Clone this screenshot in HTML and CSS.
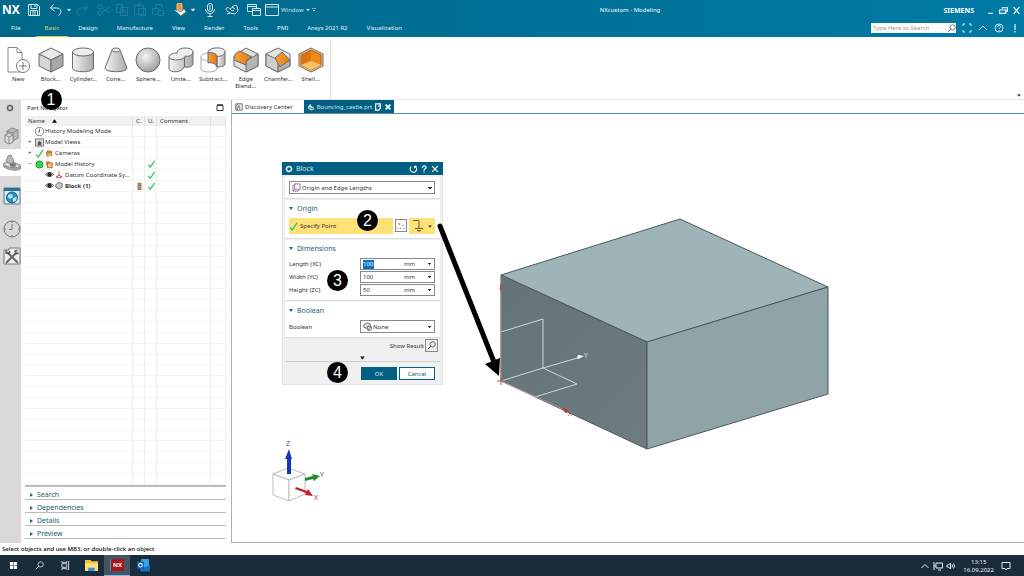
FILE: index.html
```html
<!DOCTYPE html>
<html lang="en">
<head>
<meta charset="utf-8">
<title>NXcustom - Modeling</title>
<link rel="stylesheet" href="styles.css">
</head>
<body>
<svg class="defs" aria-hidden="true">
  <defs>
    <linearGradient id="metal" x1="0" x2="1"><stop offset="0" stop-color="#f4f4f4"/><stop offset="1" stop-color="#a9a9a9"/></linearGradient>
    <radialGradient id="ball" cx=".4" cy=".35" r=".7"><stop offset="0" stop-color="#f6f6f6"/><stop offset="1" stop-color="#999"/></radialGradient>
    <linearGradient id="amber" x1="0" x2="1"><stop offset="0" stop-color="#f9a23a"/><stop offset="1" stop-color="#e27a10"/></linearGradient>
    <symbol id="tick" viewBox="0 0 10 10"><path d="M1 6l2.500 3L9 1" fill="none" stroke="#2fc653" stroke-width="1.500"/></symbol>
    <symbol id="eye" viewBox="0 0 10 10"><path d="M.5 5Q5 .5 9.500 5Q5 9.500 .5 5z" fill="#fff" stroke="#444"/><circle cx="5" cy="5" r="2.400" fill="#222"/></symbol>
    <symbol id="caret" viewBox="0 0 6 4"><path d="M0 0h6L3 4z" fill="currentColor"/></symbol>
    <symbol id="lens" viewBox="0 0 12 12"><circle cx="7.500" cy="4.500" r="3.500" fill="none" stroke="currentColor"/><path d="M5 7L1 11" stroke="currentColor" stroke-width="1.300"/></symbol>
  </defs>
</svg>

<header class="top">
  <div class="titlebar">
    <span class="brand">NX</span>
    <div class="group">
      <button aria-label="Save"><svg viewBox="0 0 14 14"><path d="M1.500 1.500h9l2 2v9h-11zM4 1.500v4h6v-4M3.500 12.500v-5h7v5M5 9h4M5 11h4M8 2v2"/></svg></button>
    </div>
    <div class="group">
      <button aria-label="Undo"><svg viewBox="0 0 14 14"><path d="M4.500 1.500L1.500 5l4 3M1.500 5h6c5 0 6 5 2 7.500"/></svg></button>
      <button class="narrow" aria-label="Undo list"><svg viewBox="0 0 6 4"><use href="#caret"/></svg></button>
      <button class="off" aria-label="Redo"><svg viewBox="0 0 14 14"><path d="M9.500 1.500l3 3.500-4 3M12.500 5h-6c-5 0-6 5-2 7.500"/></svg></button>
    </div>
    <div class="group">
      <button class="off" aria-label="Cut"><svg viewBox="0 0 14 14"><circle cx="3" cy="4" r="2"/><circle cx="3" cy="10" r="2"/><path d="M5 5l8 5M5 9l8-5"/></svg></button>
      <button class="off" aria-label="Copy"><svg viewBox="0 0 14 14"><path d="M1.500 1.500h6v8h-6zM5.500 4.500h7v8h-7zM7 7h4M7 9h4"/></svg></button>
      <button class="off" aria-label="Paste"><svg viewBox="0 0 14 14"><path d="M1.500 2.500h9v9h-9zM4 1h4v2H4zM5.500 5.500h7v7h-7z"/></svg></button>
      <button class="off" aria-label="Repeat"><svg viewBox="0 0 14 14"><path d="M1.500 5.500h6v6h-6zM5 5V1.500h6v4M7.500 7.500h5v5h-5z"/></svg></button>
    </div>
    <div class="group">
      <button aria-label="Touch mode"><svg viewBox="0 0 14 14"><path d="M1 7l4 3 3 3 5-4-2-3-3 3z" fill="#e8eef0" stroke="none"/><path d="M8 13l5-4" stroke="#8a5a2a"/><rect x="4" y="0" width="5" height="8" rx="1.500" fill="#f3913a" stroke="#ffc08a"/></svg></button>
      <button class="narrow" aria-label="Touch list"><svg viewBox="0 0 6 4"><use href="#caret"/></svg></button>
    </div>
    <div class="group">
      <button aria-label="Voice"><svg viewBox="0 0 14 14"><rect x="4.500" y=".5" width="5" height="8" rx="2.500"/><path d="M2.500 6c0 6 9 6 9 0M7 10.500v3M4.500 13.500h5M7 2v5"/></svg></button>
    </div>
    <div class="group">
      <button aria-label="Gesture"><svg viewBox="0 0 14 14"><path d="M1 6c0-2 3-2 4 0l3-2M1 6c0 2 3 3 4 4l5 1 3-3-1-5-2-1-3 2 3 2M5 6l2 2 2-1M5 10l-3 1"/></svg></button>
    </div>
    <div class="group">
      <button aria-label="Switch window"><svg viewBox="0 0 14 14"><path d="M.5 1.500h9v7h-9zM.5 3.500h9"/><path d="M5.500 5.500h8v7h-8zM5.500 7.500h8" fill="#006b8e"/></svg></button>
      <button class="labelled"><svg viewBox="0 0 14 14"><path d="M.5 1.500h13v11H.5zM.5 4h13"/></svg>Window <svg class="mini" viewBox="0 0 6 4"><use href="#caret"/></svg></button>
      <button class="narrow" aria-label="Customize"><svg viewBox="0 0 6 6"><path d="M0 .5h6" /><path d="M1 3h4L3 5z" fill="currentColor" stroke="none"/></svg></button>
    </div>
    <h1 class="apptitle">NXcustom - Modeling</h1>
    <span class="maker">SIEMENS</span>
    <div class="winctl">
      <button aria-label="Minimize"><svg viewBox="0 0 8 8"><path d="M2 6.500h4"/></svg></button>
      <button aria-label="Restore"><svg viewBox="0 0 8 8"><path d="M3 2.500V1.500h4.500v3H6M.5 3.500H6v3H.5z"/></svg></button>
      <button aria-label="Close"><svg viewBox="0 0 8 8"><path d="M1.500 1l5 6M6.500 1l-5 6"/></svg></button>
    </div>
  </div>
  <nav class="tabs">
    <button class="file">File</button><button class="current">Basic</button><button>Design</button><button>Manufacture</button><button>View</button><button>Render</button><button>Tools</button><button>PMI</button><button>Ansys 2021 R2</button><button>Visualization</button>
    <div class="tools">
      <label class="search"><input type="text" aria-label="Type Here to Search" placeholder="Type Here to Search"><svg viewBox="0 0 12 12"><use href="#lens"/></svg></label>
      <button aria-label="Full screen"><svg viewBox="0 0 10 10"><path d="M1 3V1h2M7 1h2v2M9 7v2H7M3 9H1V7"/></svg></button>
      <button aria-label="Collapse"><svg viewBox="0 0 10 10"><path d="M1 7l4-4 4 4"/></svg></button>
      <button aria-label="Help"><svg viewBox="0 0 10 10"><circle cx="5" cy="5" r="4"/><path d="M3.500 4c0-2 3-2 3 0 0 1-1.500 1-1.500 2M5 7v1"/></svg></button>
      <button aria-label="Alerts"><svg viewBox="0 0 10 10"><path d="M5 1v6M5 8v1.500" stroke-width="1.300"/></svg></button>
    </div>
  </nav>
</header>

<section class="ribbon" aria-label="Basic">
  <div class="commands">
    <button><svg viewBox="0 0 26 26"><path d="M3 .5h9l5 5V25H3zM12 .5v5h5" fill="#fff" stroke="#888"/><circle cx="18" cy="19" r="6.500" fill="#fff" stroke="#777"/><path d="M18 15v8M14 19h8" stroke="#777"/></svg><span>New</span></button>
    <button><svg viewBox="0 0 26 26" class="solid"><path d="M13 1l12 6-12 6L1 7z" fill="#e9e9e9"/><path d="M1 7l12 6v12L1 19z" fill="#d5d5d5"/><path d="M25 7l-12 6v12l12-6z" fill="#a8a8a8"/></svg><span>Block...</span><b class="badge one">1</b></button>
    <button><svg viewBox="0 0 26 26" class="solid"><path d="M2.500 5v16c0 5 21 5 21 0V5z" fill="url(#metal)"/><ellipse cx="13" cy="5" rx="10.500" ry="4" fill="#eee"/></svg><span>Cylinder...</span></button>
    <button><svg viewBox="0 0 26 26" class="solid"><path d="M9 3L2 21c0 5 22 5 22 0L17 3z" fill="url(#metal)"/><ellipse cx="13" cy="3" rx="4" ry="2" fill="#eee"/></svg><span>Cone...</span></button>
    <button><svg viewBox="0 0 26 26" class="solid"><circle cx="13" cy="13" r="12" fill="url(#ball)"/></svg><span>Sphere...</span></button>
    <button><svg viewBox="0 0 26 26" class="solid"><path d="M1 10v12c1 4 13 4 15-2 5 1 9-1 9-3V4z" fill="url(#metal)"/><path d="M9 6c0-7 16-6 16-1 0 3-4 5-8 4 0 5-16 5-16 1 0-3 5-4 8-4z" fill="#eee"/><path d="M16.500 10v10"/></svg><span>Unite...</span></button>
    <button><svg viewBox="0 0 26 26" class="solid"><path d="M1 10v12c0 4 15 4 16 0V10" fill="#fff" stroke="#aaa"/><path d="M1 10c0-2 4-4 7-4M1 10c0 3 5 4 8 4" fill="none" stroke="#aaa"/><path d="M17 9v11c5 0 8-1 8-3V4z" fill="url(#metal)"/><path d="M8 5.500c5 0 9 1 9 4V20c-1-3-5-5-9-4z" fill="url(#amber)"/><path d="M8 5.500C8-.5 25-.5 25 4.500c0 3-4 5-8 5 0-3-4-4-9-4z" fill="#eee"/></svg><span>Subtract...</span></button>
    <button><svg viewBox="0 0 26 26" class="solid"><path d="M13 1l12 6v12l-12 6-12-6V9z" fill="#e0e0e0"/><path d="M25 7v12l-12 6V14z" fill="#b5b5b5"/><path d="M7 4l12 6c-4 1-6 4-6 8L1 13C1 8 3 5 7 4z" fill="url(#amber)"/></svg><span>Edge Blend...</span></button>
    <button><svg viewBox="0 0 26 26" class="solid"><path d="M13 1l12 6v12l-12 6-12-6V7z" fill="#e4e4e4"/><path d="M1 7l12 6v12L1 19z" fill="#cfcfcf"/><path d="M25 13v6l-12 6v-6z" fill="#b5b5b5"/><path d="M17 5l8 8-10 7-5-9z" fill="url(#amber)"/></svg><span>Chamfer...</span></button>
    <button><svg viewBox="0 0 26 26" class="solid"><path d="M13 1l12 6v12l-12 6-12-6V7z" fill="#d2d2d2" stroke="#8c6330"/><path d="M13 3l10 5v10l-10 5-10-5V8z" fill="#f08a1c" stroke="#a85e10"/><path d="M13 3v11L3 18V8z" fill="#d97510" stroke="none"/><path d="M13 14l10 4-10 5-10-5z" fill="#ffc165" stroke="none"/></svg><span>Shell...</span></button>
  </div>
  <button class="more" aria-label="Ribbon options"><svg viewBox="0 0 6 4"><use href="#caret"/></svg></button>
</section>

<main class="workspace">
  <aside class="resourcebar">
    <button class="cog" aria-label="Settings"><svg viewBox="0 0 10 10"><circle cx="5" cy="5" r="3" fill="none" stroke="#555" stroke-width="1.500"/><path d="M5 .5v9M.5 5h9M2 2l6 6M8 2L2 8" stroke="#555" stroke-dasharray="1 7"/></svg></button>
    <button aria-label="Assembly Navigator"><svg viewBox="0 0 18 18" class="solid soft"><path d="M4 4l5-3 6 2v8l-5 3-6-2z" fill="#bbb"/><path d="M4 4l6 2 5-3M10 6v8" fill="none"/><path d="M2 8l4-2 4 2v7l-4 2-4-2z" fill="#ddd"/><path d="M2 8l4 2 4-2M6 10v7" fill="none"/></svg></button>
    <button class="active" aria-label="Part Navigator"><svg viewBox="0 0 18 18" class="solid soft"><path d="M0 10c3-3 13-2 18 2v2c-3 4-14 2-18-2z" fill="#aaa"/><path d="M0 10c3-3 13-2 18 2-4 3-14 2-18-2z" fill="#ddd"/><path d="M3 7l2-5 3-1 3 6-4 3z" fill="#bbb"/><ellipse cx="10" cy="11" rx="3" ry="1.500" fill="#777"/></svg></button>
    <button class="web" aria-label="Web Browser"><svg viewBox="0 0 18 18"><path d="M1 1h16v16H1z" fill="#d6e5ec" stroke="#678"/><path d="M1 1h16v3H1z" fill="#2e6f99"/><circle cx="9" cy="10.500" r="5.500" fill="#2d91bd" stroke="#1b6285"/><path d="M5 8l4-1 1 3-3 2-2-2zM10 11l4-1-1 4-3 1z" fill="#b5e0ec"/></svg></button>
    <button class="history" aria-label="History"><svg viewBox="0 0 18 18" fill="none" stroke="#777"><circle cx="9" cy="9" r="8"/><path d="M9 4v5.500H6"/><path d="M9 1v2M9 15v2M1 9h2M15 9h2"/></svg></button>
    <button aria-label="Roles"><svg viewBox="0 0 18 18"><path d="M1 3h5V1h11v16H1z" fill="#eee" stroke="#777"/><path d="M4 5l10 10M14 5L4 15" stroke="#666" stroke-width="2"/><path d="M3 3v3l3 1 1-3M15 3l-3 1 1 3 3-1M3 16l2-2M15 16l-2-2" stroke="#555" stroke-width="1.300" fill="none"/></svg></button>
  </aside>

  <section class="navigator">
    <header><h2>Part Navigator</h2><button aria-label="Undock"><svg viewBox="0 0 8 8"><path d="M1 1.500h6v5H1z" fill="#fff" stroke="#333"/><path d="M1 1h6" stroke="#333" stroke-width="1.500"/></svg></button></header>
    <div class="treebox">
    <table class="tree">
      <colgroup><col><col class="c1"><col class="c1"><col class="c2"><col class="c3"></colgroup>
      <thead><tr><th>Name <svg class="sort" viewBox="0 0 6 4"><path d="M0 4h6L3 0z"/></svg></th><th>C.</th><th>U.</th><th>Comment</th><th></th></tr></thead>
      <tbody>
        <tr><td><div class="node"><i></i><svg viewBox="0 0 10 10"><circle cx="5" cy="5" r="4.500" fill="#fff" stroke="#777"/><path d="M5 2v3.500H3" fill="none" stroke="#555"/></svg>History Modeling Mode</div></td><td></td><td></td><td></td><td></td></tr>
        <tr><td><div class="node"><i>+</i><svg viewBox="0 0 10 10"><path d="M.5 1h9v8h-9z" fill="#ddd" stroke="#666"/><path d="M3 8V5l2-2 2 2v3z" fill="#555"/></svg>Model Views</div></td><td></td><td></td><td></td><td></td></tr>
        <tr><td><div class="node"><i>+</i><svg viewBox="0 0 10 10"><use href="#tick"/></svg><svg viewBox="0 0 10 10"><path d="M1 4l2-3 6 1v6l-7 1z" fill="#b5854a"/><path d="M3 5h5v3H3z" fill="#e8b45e"/></svg>Cameras</div></td><td></td><td></td><td></td><td></td></tr>
        <tr><td><div class="node"><i>−</i><svg viewBox="0 0 10 10"><circle cx="5" cy="5" r="4" fill="#35d24c" stroke="#1d8f34"/></svg><svg viewBox="0 0 10 10"><path d="M1 1h5v5H1z" fill="#e58a4a"/><path d="M3 3h6v6H3z" fill="#f1c36a" stroke="#a0522d"/></svg>Model History</div></td><td></td><td><svg viewBox="0 0 10 10"><use href="#tick"/></svg></td><td></td><td></td></tr>
        <tr><td><div class="node child"><svg viewBox="0 0 10 10"><use href="#eye"/></svg><svg viewBox="0 0 10 10"><path d="M5 1v5L1 9M5 6l4 3M3 6h4M2 7v2h6V7" fill="none" stroke="#b0476b"/></svg>Datum Coordinate Sy...</div></td><td></td><td><svg viewBox="0 0 10 10"><use href="#tick"/></svg></td><td></td><td></td></tr>
        <tr><td><div class="node child"><svg viewBox="0 0 10 10"><use href="#eye"/></svg><svg viewBox="0 0 10 10"><path d="M1 4l4-3 4 2v4L5 9.500 1 7z" fill="#ccc" stroke="#555"/></svg><b>Block (1)</b></div></td><td><svg viewBox="0 0 10 10"><path d="M3 1.500h4v2H3zM3 4.500h4v2H3zM3 7.500h4v2H3z" fill="#e6c79a" stroke="#7b5a3a"/></svg></td><td><svg viewBox="0 0 10 10"><use href="#tick"/></svg></td><td></td><td></td></tr>
        <tr><td></td><td></td><td></td><td></td><td></td></tr><tr><td></td><td></td><td></td><td></td><td></td></tr>
        <tr><td></td><td></td><td></td><td></td><td></td></tr><tr><td></td><td></td><td></td><td></td><td></td></tr>
        <tr><td></td><td></td><td></td><td></td><td></td></tr><tr><td></td><td></td><td></td><td></td><td></td></tr>
        <tr><td></td><td></td><td></td><td></td><td></td></tr><tr><td></td><td></td><td></td><td></td><td></td></tr>
        <tr><td></td><td></td><td></td><td></td><td></td></tr><tr><td></td><td></td><td></td><td></td><td></td></tr>
        <tr><td></td><td></td><td></td><td></td><td></td></tr><tr><td></td><td></td><td></td><td></td><td></td></tr>
        <tr><td></td><td></td><td></td><td></td><td></td></tr><tr><td></td><td></td><td></td><td></td><td></td></tr>
        <tr><td></td><td></td><td></td><td></td><td></td></tr><tr><td></td><td></td><td></td><td></td><td></td></tr>
        <tr><td></td><td></td><td></td><td></td><td></td></tr><tr><td></td><td></td><td></td><td></td><td></td></tr>
        <tr><td></td><td></td><td></td><td></td><td></td></tr><tr><td></td><td></td><td></td><td></td><td></td></tr>
        <tr><td></td><td></td><td></td><td></td><td></td></tr><tr><td></td><td></td><td></td><td></td><td></td></tr>
        <tr><td></td><td></td><td></td><td></td><td></td></tr><tr><td></td><td></td><td></td><td></td><td></td></tr>
        <tr><td></td><td></td><td></td><td></td><td></td></tr><tr><td></td><td></td><td></td><td></td><td></td></tr>
        <tr><td></td><td></td><td></td><td></td><td></td></tr>
      </tbody>
    </table>
    </div>
    <div class="folds">
      <button>Search</button><button>Dependencies</button><button>Details</button><button>Preview</button>
    </div>
  </section>

  <section class="document">
    <div class="doctabs">
      <button><svg viewBox="0 0 10 10" fill="none" stroke="#555"><path d="M1 1h8v8H1zM1 4l3-3M1 7l5-5M3 9V6l3-2v5"/></svg>Discovery Center</button>
      <button class="current"><svg viewBox="0 0 10 10"><path d="M1 5l3-4 2 3 3 2v2L5 9.500 1 7z" fill="#c9d4d8"/><path d="M2 6l6 1" stroke="#555"/></svg>Bouncing_castle.prt<svg viewBox="0 0 10 10" fill="none" stroke="#fff" stroke-width="1.500"><path d="M2 1h6v5L6 9H2zM5 4h2"/></svg><svg viewBox="0 0 10 10" stroke="#fff" stroke-width="2"><path d="M2 2l6 6M8 2L2 8"/></svg></button>
    </div>
    <div class="viewport">
      <svg class="scene" viewBox="232 114 792 428" preserveAspectRatio="xMinYMin meet" role="img" aria-label="Block model">
        <defs><linearGradient id="side" x1="0" y1="0" x2="1" y2="1"><stop offset="0" stop-color="#647378"/><stop offset="1" stop-color="#6d7c80"/></linearGradient></defs>
        <g stroke="#4c585b" stroke-width="1" stroke-linejoin="round">
          <path d="M501 275L680 219l148 68-181 55z" fill="#9fb4b9"/>
          <path d="M501 275l146 67v107l-146-68z" fill="url(#side)"/>
          <path d="M647 342l181-55v107l-181 55z" fill="#90a4a7"/>
        </g>
        <path d="M501 332l42-13v49l-42 13 34 16 42-13-34-16M543 368l38-11" fill="none" stroke="#cfd8da"/>
        <path d="M577 358l1-3 6 1-6 3z" fill="#fff"/>
        <text x="584" y="358" class="axis" fill="#dde4e6">Y</text>
        <path d="M501 277v104l66 30" fill="none" stroke="#b88f8c"/>
        <path d="M500 290l1-6 1 6zM562 408l6 2-2 3zM497 381h7M501 378v7" fill="#a33" stroke="#b0524c"/>
        <text x="568" y="416" class="axis" fill="#a55">X</text>
        <g fill="#fff" stroke="#bbb"><path d="M273 474l15-6 17 6-16 6z"/><path d="M273 474l16 6v21l-16-6z"/><path d="M305 474l-16 6v21l16-7z"/></g>
        <path d="M287 474v-15h-2l4-10 3 10h-1v15z" fill="#1637b5"/>
        <path d="M305 478l8-2-1-2 8 2-6 5-1-2-8 2z" fill="#258a2d"/>
        <path d="M296 487l11 4 1-2 5 7-8-1 1-2-11-4z" fill="#c11f26"/>
        <text x="286" y="446" class="axis" fill="#4457b8">Z</text><text x="320" y="477" class="axis" fill="#555">Y</text><text x="314" y="500" class="axis" fill="#a33">X</text>
      </svg>

      <form class="dialog" aria-label="Block">
        <header><svg viewBox="0 0 10 10"><circle cx="5" cy="5" r="3" stroke-width="1.500"/><path d="M5 .5v9M.5 5h9M2 2l6 6M8 2L2 8" stroke-dasharray="1 7"/></svg><h2>Block</h2>
          <button type="button" aria-label="Reset"><svg viewBox="0 0 10 10"><path d="M3 2a4 4 0 1 0 4-.5M7 4V1.500h2.500" stroke-width="1.300"/></svg></button>
          <button type="button" aria-label="Help"><svg viewBox="0 0 10 10"><path d="M3 3.500C3 .5 7.500 .5 7.500 3c0 2-2.500 1.500-2.500 4M5 8v1.500" stroke-width="1.600"/></svg></button>
          <button type="button" aria-label="Close"><svg viewBox="0 0 10 10"><path d="M1.500 1.500l7 7M8.500 1.500l-7 7" stroke-width="1.500"/></svg></button>
        </header>
        <div class="panel type">
          <div class="pick"><svg viewBox="0 0 10 10" fill="#fff" stroke="#779"><path d="M1 3l2-2h6v6L7 9H1z"/><path d="M3 1v6h6M3 7L1 9" fill="none" stroke="#a68"/></svg><select aria-label="Type"><option>Origin and Edge Lengths</option></select></div>
        </div>
        <div class="panel">
          <h3>Origin</h3>
          <div class="point">
            <button type="button" class="specify"><svg viewBox="0 0 10 10"><use href="#tick"/></svg>Specify Point</button>
            <button type="button" class="pt" aria-label="Point dialog"><svg viewBox="0 0 12 12"><path d="M4 2v3M2.500 3.500h3" stroke="#d58a2a"/><path d="M2 9h1M5 9h1M9 9h1M8 5h1" stroke="#345" stroke-width="1.300"/></svg></button>
            <button type="button" class="infer" aria-label="Inferred point"><svg viewBox="0 0 12 12" fill="none" stroke="#6b5b2a"><path d="M1 .5h6v8M3 8.500h8M5 10.500h4M7 11v1"/></svg><svg class="mini" viewBox="0 0 6 4"><use href="#caret"/></svg></button>
          </div>
          <b class="badge two">2</b>
        </div>
        <div class="panel">
          <h3>Dimensions</h3>
          <div class="field"><label for="len">Length (XC)</label><div class="num"><input id="len" class="marked" value="100"><select aria-label="Length unit"><option>mm</option></select></div></div>
          <div class="field"><label for="wid">Width (YC)</label><div class="num"><input id="wid" value="100"><select aria-label="Width unit"><option>mm</option></select></div></div>
          <div class="field"><label for="hei">Height (ZC)</label><div class="num"><input id="hei" value="50"><select aria-label="Height unit"><option>mm</option></select></div></div>
          <b class="badge three">3</b>
        </div>
        <div class="panel">
          <h3>Boolean</h3>
          <div class="field"><label for="boo">Boolean</label><div class="pick"><svg viewBox="0 0 10 10"><path d="M1 3l3-2 4 1v3L4 7 1 6z" fill="#ddd" stroke="#666"/><circle cx="7" cy="7" r="2.500" fill="#eee" stroke="#555"/><path d="M5 9l4-4" stroke="#555"/></svg><select id="boo"><option>None</option></select></div></div>
        </div>
        <div class="result"><span>Show Result</span><button type="button" aria-label="Show Result"><svg viewBox="0 0 12 12"><use href="#lens"/></svg></button></div>
        <button type="button" class="expand" aria-label="More"><svg viewBox="0 0 6 4"><use href="#caret"/></svg></button>
        <div class="actions"><button type="button" class="ok">OK</button><button type="button" class="cancel">Cancel</button><b class="badge four">4</b></div>
      </form>

      <svg class="scene note" viewBox="232 114 792 428" preserveAspectRatio="xMinYMin meet" aria-hidden="true">
        <path d="M440 226L494 362" stroke="#000" stroke-width="5" stroke-linecap="round"/><path d="M485 364l15-6-1 18z"/>
      </svg>
    </div>
  </section>
</main>

<footer class="status">Select objects and use MB3, or double-click an object</footer>
<div class="taskbar">
  <button aria-label="Start"><svg viewBox="0 0 10 10" fill="#fff"><path d="M1 1h3.700v3.700H1zM5.300 1H9v3.700H5.300zM1 5.300h3.700V9H1zM5.300 5.300H9V9H5.300z"/></svg></button>
  <button aria-label="Search"><svg viewBox="0 0 12 12"><use href="#lens"/></svg></button>
  <button aria-label="Task view"><svg viewBox="0 0 10 10" fill="none" stroke="#dde"><path d="M1 3h5.500v4H1zM1 0v1.500h5.500V0M1 10V8.500h5.500V10M8.500 0v10"/></svg></button>
  <button aria-label="Explorer"><svg class="big" viewBox="0 0 12 12"><path d="M0 1h5l1 1h6v9H0z" fill="#f5c342"/><path d="M0 4h12v7H0z" fill="#ffdf7e"/><path d="M3 11V8h6v3z" fill="#3b8fd6"/></svg></button>
  <button class="running"><span>NX</span></button>
  <button aria-label="Outlook"><svg class="big" viewBox="0 0 12 12"><path d="M4 0h7v8H4z" fill="#35a5ea"/><path d="M3 5l4.500 3L12 5v6.500H3z" fill="#1373c9"/><path d="M0 2.500h6.500V9H0z" fill="#0a5fb5"/><circle cx="3.200" cy="5.700" r="1.700" fill="none" stroke="#fff"/></svg></button>
  <div class="tray">
    <svg viewBox="0 0 10 10"><path d="M1.500 7L5 3.500 8.500 7"/></svg>
    <svg viewBox="0 0 10 10"><path d="M3 2h6.500v5H3zM5 9h3M1 1v4h2M1 5v4"/></svg>
    <svg viewBox="0 0 10 10"><path d="M1 4h1.500l2-2v6l-2-2H1zM6 3.500q1 1.500 0 3M7.500 2.500q2 2.500 0 5"/></svg>
    <time datetime="2022-09-16T13:15"><span>13:15</span><span>16.09.2022</span></time>
    <svg viewBox="0 0 10 10"><path d="M1 1.500h8v6H6L5 9 4 7.500H1z"/></svg>
  </div>
</div>
</body>
</html>
```
FILE: styles.css
```css
* { box-sizing: border-box; }
body {
  margin: 0;
  min-height: 100vh;
  display: flex;
  flex-direction: column;
  background: #fff;
  color: #333;
  font: 6px/8px "Noto Sans", "Open Sans", sans-serif;
}
button, input, select { font: inherit; color: inherit; background: none; border: 0; padding: 0; margin: 0; border-radius: 0; }
h1, h2, h3 { margin: 0; font: inherit; }
svg { display: block; flex: none; }
.defs { position: absolute; width: 0; height: 0; }

/* Title bar and tabs */
.top { background: linear-gradient(90deg, #006889, #006e93 40%, #007ba6); color: #fff; }
.titlebar { display: flex; align-items: center; height: 20px; padding: 0 3px 0 2px; gap: 4px; position: relative; }
.brand { font: bold 12px/16px "Noto Sans", sans-serif; width: 19px; }
.group { display: flex; }
.group button { width: 18px; height: 16px; display: flex; align-items: center; justify-content: center; }
.group svg { width: 14px; height: 14px; fill: none; stroke: #d4e8ef; }
.group .narrow { width: 8px; }
.group .narrow svg, .group .mini { width: 4px; height: 4px; stroke: none; }
.group .narrow:last-child svg { stroke: #d4e8ef; }
.group .off { opacity: 0.15; }
.group .labelled { width: auto; gap: 2px; padding-left: 2px; color: #cfe4ec; }
.apptitle { position: absolute; left: 0; right: 0; padding-left: 236px; text-align: center; pointer-events: none; }
.maker { margin-left: auto; font: bold 7px/9px "Noto Sans", sans-serif; }
.winctl { display: flex; gap: 4px; padding-left: 8px; }
.winctl svg { width: 9px; height: 9px; fill: none; stroke: #fff; }
.tabs { display: flex; gap: 1px; height: 17px; align-items: stretch; }
.tabs button { padding: 0 9px 1px; color: #e6f2f6; }
.tabs .file { padding: 0 14px 1px 11px; }
.tabs .current { color: #d8d06a; box-shadow: inset 0 -1px #d8c84a; }
.tools { margin-left: auto; display: flex; align-items: center; gap: 6px; padding: 0 4px 1px 0; }
.tools button { padding: 0; }
.tools button svg { width: 10px; height: 10px; fill: none; stroke: #d9ecf3; }
.search { display: flex; align-items: center; width: 85px; height: 10px; background: #fff; color: #555; }
.search input { flex: 1; min-width: 0; padding: 0 2px; }
.search input::placeholder { color: #999; opacity: 1; }
.search svg { width: 9px; height: 9px; }

/* Ribbon */
.ribbon { display: flex; justify-content: space-between; align-items: flex-end; height: 63px; border-bottom: 1px solid #e9e9e9; padding-left: 2px; }
.commands { display: grid; grid-template-columns: repeat(10, 1fr); width: 329px; height: 60px; padding: 8px 3px 0 0; border-right: 1px solid #ddd; }
.commands button { display: flex; flex-direction: column; align-items: center; gap: 3px; position: relative; line-height: 7px; }
.commands svg { width: 26px; height: 26px; }
.commands span { max-width: 32px; }
.solid { stroke: #6c6c6c; stroke-width: 1; stroke-linejoin: round; }
.soft { stroke: #888; }
.more { padding: 2px 3px; color: #222; }
.more svg { width: 4px; height: 3px; }

/* Numbered callouts */
.badge { position: absolute; z-index: 5; width: 21px; height: 21px; border-radius: 50%; background: #000; color: #fff; font: 16px/21px "Liberation Sans", Arial, sans-serif; text-align: center; }
.one { top: 42px; left: 6px; }
.two { left: 72px; top: 10px; }
.three { left: 42px; top: 30px; }
.four { left: 42px; top: 0; }

/* Workspace */
.workspace { flex: 1; display: flex; min-height: 0; }
.resourcebar { width: 21px; background: #d9d9d9; display: flex; flex-direction: column; flex: none; }
.resourcebar button { height: 27px; display: flex; align-items: center; padding-left: 3px; }
.resourcebar svg { width: 18px; height: 18px; }
.resourcebar .cog { height: 15px; margin-bottom: 7px; padding-left: 6px; }
.resourcebar .cog svg { width: 8px; height: 8px; }
.resourcebar .active { background: #fff; }
.resourcebar .web, .resourcebar .history { margin-top: 6px; }
.navigator { width: 211px; flex: none; display: flex; flex-direction: column; padding: 0 5px 4px 4px; border-right: 1px solid #a9b1b5; }
.navigator > header { display: flex; justify-content: space-between; align-items: center; height: 16px; padding: 0 2px; }
.navigator > header svg { width: 8px; height: 8px; }
.treebox { flex: 1; min-height: 0; border-bottom: 2px solid #bdbdbd; }
.tree { width: 100%; height: 100%; border-collapse: collapse; table-layout: fixed; }
.tree tr { height: 10px; }
.c1 { width: 12px; }
.c2 { width: 54px; }
.c3 { width: 15px; }
.tree th { background: #f1f1f1; font-weight: normal; text-align: left; padding: 0 0 0 3px; border-right: 1px solid #e2e2e2; line-height: 8px; }
.tree td { padding: 0; border-right: 1px solid #efefef; border-bottom: 1px solid #f3f3f3; line-height: 8px; }
.tree td > svg { width: 9px; height: 8px; margin-left: 2px; }
.sort { display: inline-block; width: 5px; height: 4px; margin-left: 6px; }
.node { display: flex; align-items: center; gap: 1px; white-space: nowrap; }
.node i { width: 9px; padding-left: 3px; font-style: normal; }
.node svg { width: 9px; height: 9px; }
.node svg + svg { margin-right: 1px; width: 8px; }
.child { padding-left: 20px; }
.folds { display: flex; flex-direction: column; }
.folds button { height: 13px; display: flex; align-items: center; gap: 4px; padding: 3px 0 0 5px; border-bottom: 1px solid #bbb; color: #24606f; font-size: 7px; }
.folds button::before { content: ""; border: 2px solid transparent; border-left: 3px solid #24606f; border-right: 0; }

.document { flex: 1; min-width: 0; display: flex; flex-direction: column; }
.doctabs { display: flex; height: 14px; border-bottom: 1px solid #5b8f9f; padding-left: 1px; }
.doctabs button { display: flex; align-items: center; gap: 2px; padding: 0 11px 0 2px; }
.doctabs svg { width: 8px; height: 8px; }
.doctabs .current { background: #005f82; color: #cfe4ec; padding: 0 2px 0 3px; }
.viewport { flex: 1; position: relative; border-bottom: 1px solid #aaa; overflow: hidden; }
.scene { position: absolute; inset: 0; width: 100%; height: 100%; }
.note { pointer-events: none; }
.axis { font: 7px "Noto Sans", sans-serif; }

/* Block dialog */
.dialog { position: absolute; left: 50px; top: 48px; width: 161px; background: #f0f0f0; border: 1px solid #e2e2e2; border-top: 0; padding: 0 2px 4px; color: #333; }
.dialog > header { display: flex; align-items: center; gap: 3px; height: 13px; margin: 0 -3px 2px; padding: 0 4px 0 3px; background: #005f82; color: #cfe4ec; }
.dialog > header svg { width: 8px; height: 8px; fill: none; stroke: #fff; }
.dialog > header h2 { flex: 1; font-size: 7px; }
.panel { position: relative; background: #fff; margin-bottom: 1px; padding: 3px 5px 4px 4px; border-bottom: 1px solid #ddd; }
.panel.type { padding-top: 4px; }
.panel h3 { display: flex; align-items: center; gap: 4px; height: 11px; color: #24606f; font-size: 7px; }
.panel h3::before { content: ""; border: 2px solid transparent; border-top: 3px solid #24606f; border-bottom: 0; }
.pick, .num { display: flex; align-items: center; border: 1px solid #888; background: #fff; height: 13px; }
.pick svg { width: 9px; height: 9px; margin: 0 1px 0 2px; }
select { appearance: none; flex: 1; min-width: 0; background: linear-gradient(45deg, transparent 50%, #333 50%) right 4px center / 2px 2px no-repeat, linear-gradient(-45deg, transparent 50%, #333 50%) right 2px center / 2px 2px no-repeat; }
.point { display: flex; gap: 2px; height: 16px; margin-top: 4px; }
.specify { flex: 1; display: flex; align-items: center; gap: 2px; background: #ffe17a; }
.specify svg { width: 9px; height: 9px; }
.pt { width: 12px; height: 13px; margin-top: 1px; background: #fff; border: 1px solid #888; }
.infer { width: 26px; display: flex; align-items: center; justify-content: space-between; padding: 0 3px; background: #ffe17a; }
.infer svg { width: 12px; height: 12px; }
.infer .mini { width: 4px; height: 3px; }
.field { display: flex; align-items: center; justify-content: space-between; margin-top: 1px; }
h3 + .field { margin-top: 4px; }
.field .num, .field .pick { width: 75px; }
.field .num { height: 12px; }
.num input { width: 43px; height: 9px; padding-left: 2px; }
.num .marked { color: #fff; background: linear-gradient(#0b72c5, #0b72c5) 2px 0 / 11px 9px no-repeat; }
.result { display: flex; justify-content: flex-end; align-items: center; gap: 1px; padding-right: 2px; }
.result button { border: 1px solid #888; width: 13px; height: 13px; padding: 1px; }
.result svg { width: 9px; height: 9px; }
.expand { display: flex; justify-content: center; width: 100%; height: 10px; padding-top: 4px; border-bottom: 1px solid #ccc; }
.expand svg { width: 5px; height: 4px; color: #222; }
.actions { position: relative; display: flex; justify-content: flex-end; gap: 2px; padding: 5px 5px 0 0; }
.actions button { width: 36px; height: 13px; border: 1px solid #005f82; color: #005f82; background: #fff; }
.actions .ok { background: #005f82; color: #d7e8ee; }

/* Status line and taskbar */
.status { height: 12px; padding: 2px; color: #111; font-family: "Open Sans", sans-serif; font-weight: 600; }
.taskbar { display: flex; height: 21px; background: #1a2b3b; color: #e6ebef; }
.taskbar button { width: 26px; display: flex; align-items: center; justify-content: center; }
.taskbar svg { width: 9px; height: 9px; }
.taskbar .big { width: 13px; height: 13px; }
.taskbar .running { background: #455463; border-bottom: 1px solid #76b9ed; }
.running span { background: #a8151c; border-left: 1px solid #35a58a; color: #fff; font-weight: bold; padding: 2px; }
.tray { margin-left: auto; display: flex; align-items: center; gap: 3px; padding-right: 13px; }
.tray svg { fill: none; stroke: #e6ebef; width: 10px; height: 10px; }
.tray time { display: flex; flex-direction: column; align-items: center; padding: 0 4px; }
```
